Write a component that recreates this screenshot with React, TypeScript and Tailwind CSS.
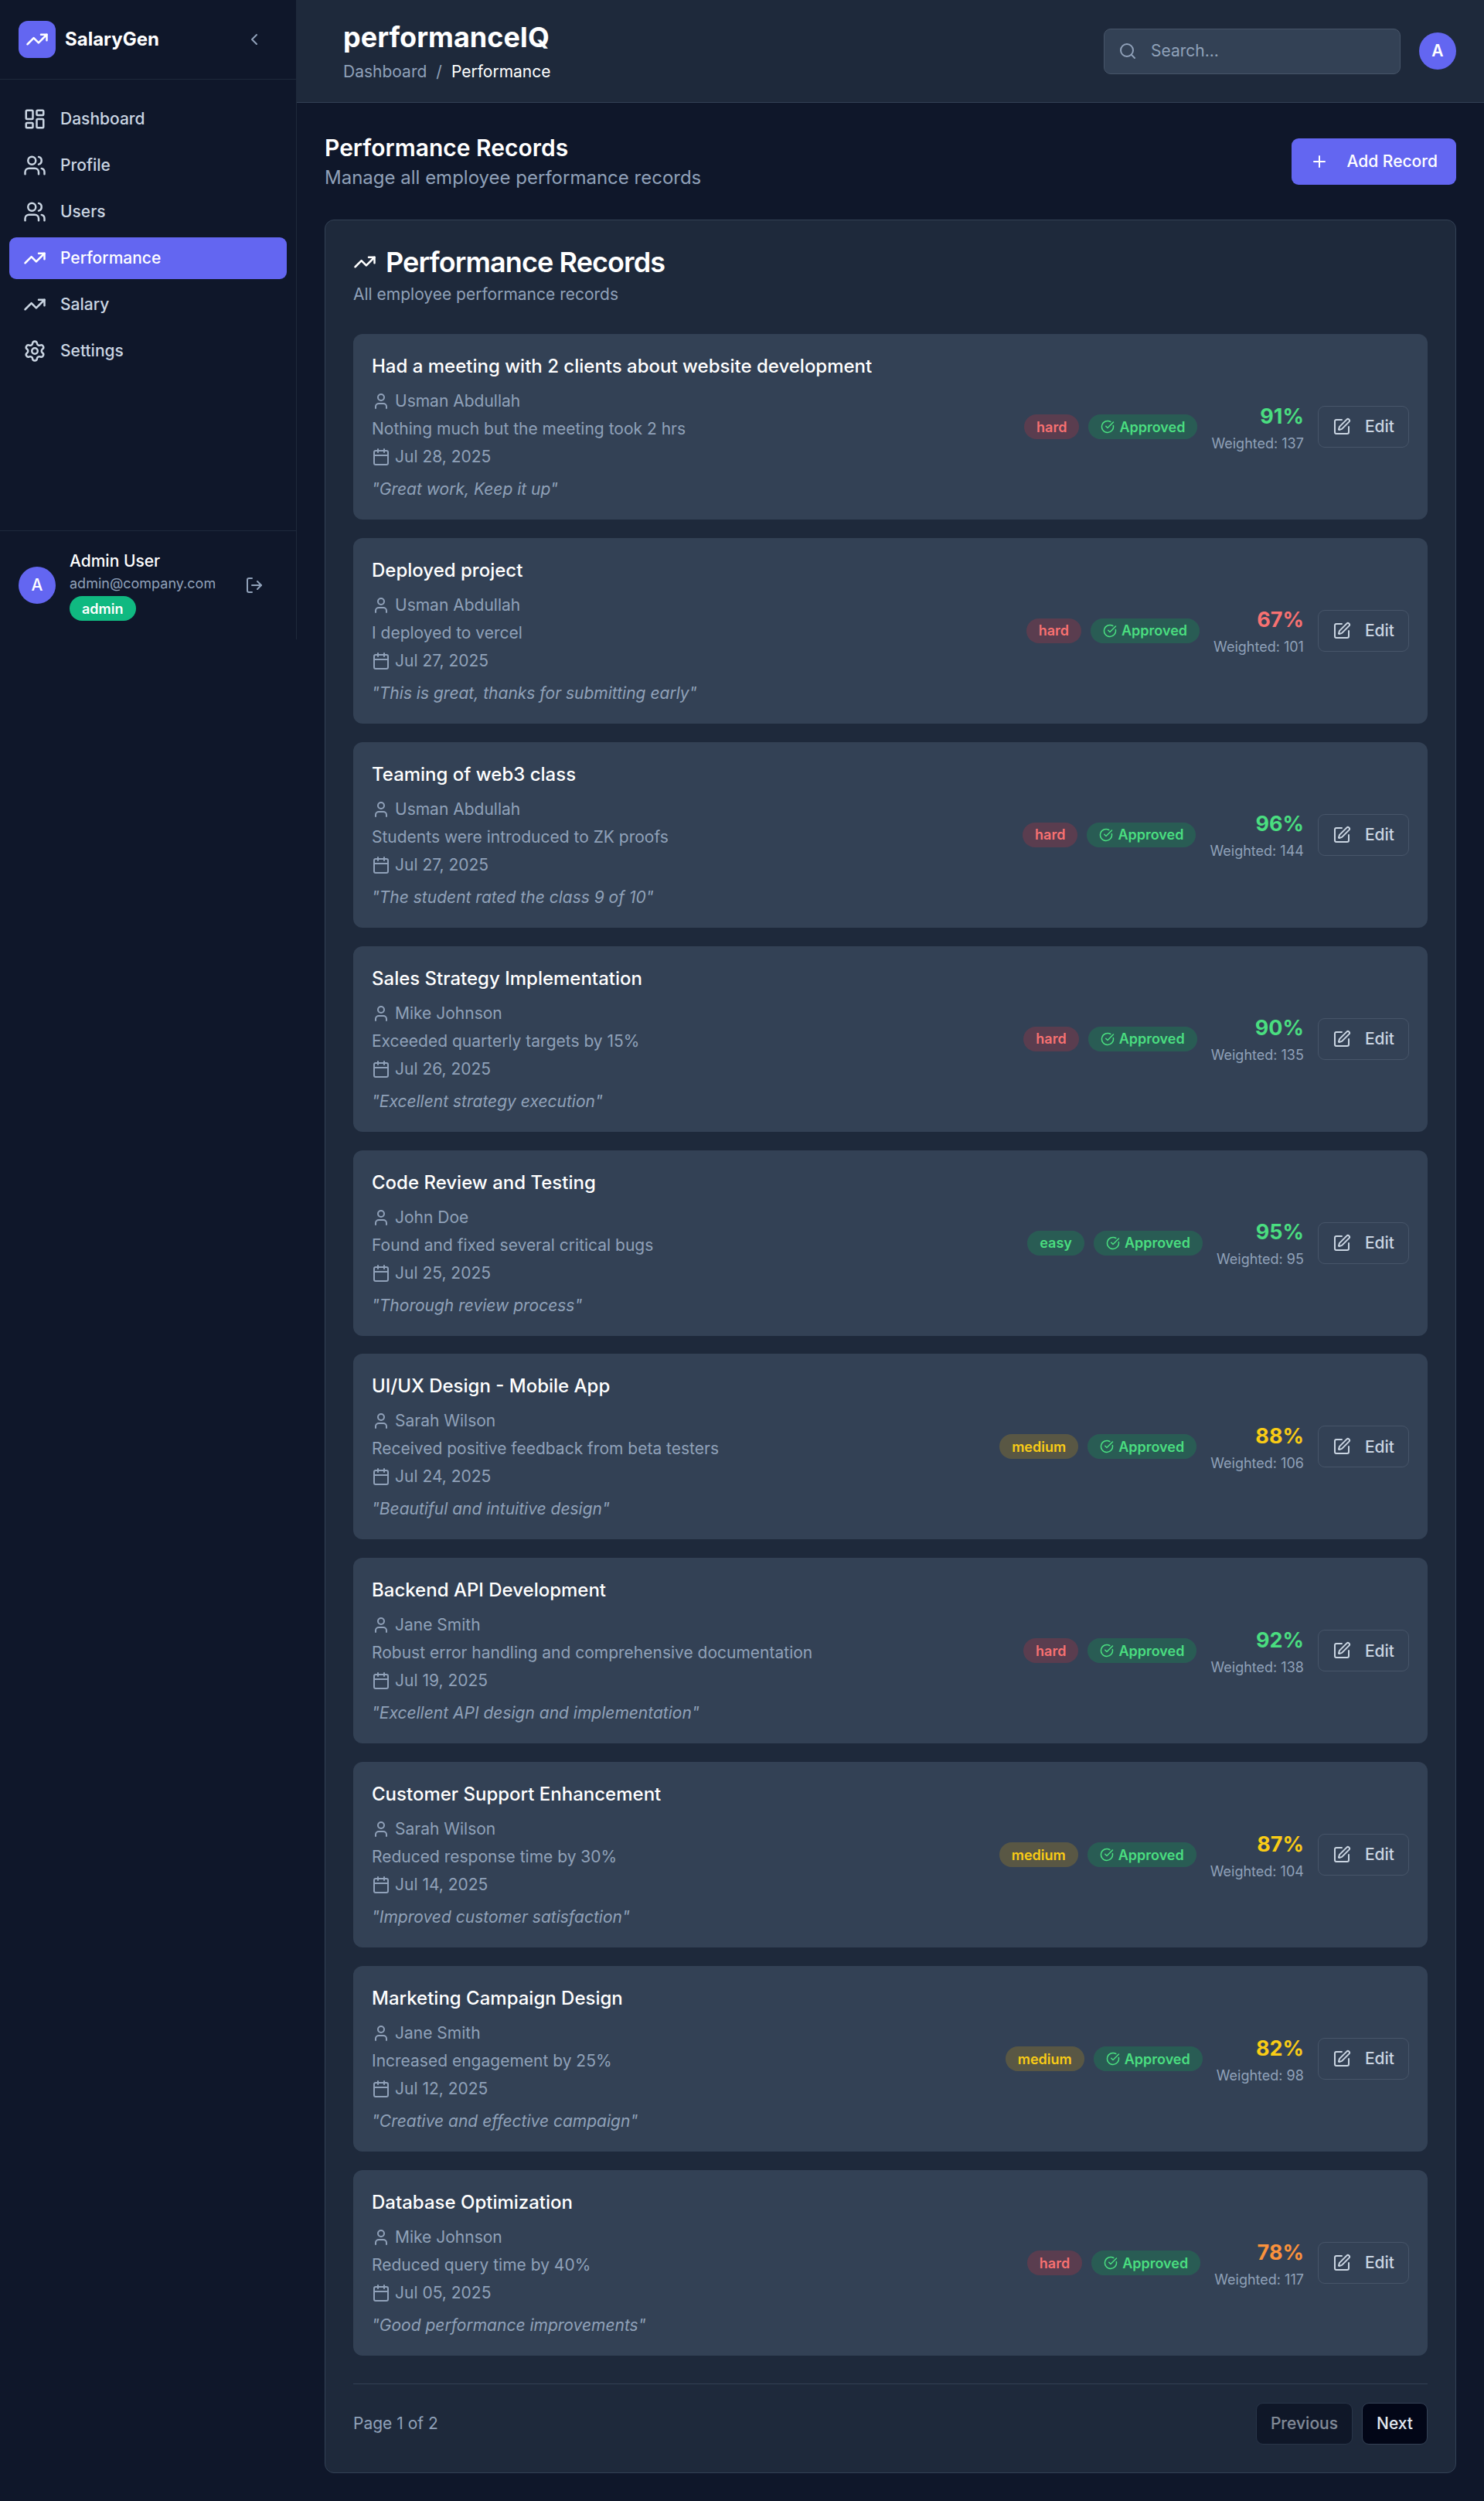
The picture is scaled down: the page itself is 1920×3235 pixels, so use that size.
import {
    Calendar,
    ChevronLeft,
    CircleCheckBig,
    LayoutDashboard,
    LogOut,
    Plus,
    Search,
    Settings,
    SquarePen,
    TrendingUp,
    User,
    Users,
} from "lucide-react";

type Difficulty = "easy" | "medium" | "hard";

type PerformanceRecord = {
    title: string;
    author: string;
    description: string;
    date: string;
    comment: string;
    difficulty: Difficulty;
    score: number;
    weighted: number;
};

const navItems = [
    { label: "Dashboard", icon: LayoutDashboard },
    { label: "Profile", icon: Users },
    { label: "Users", icon: Users },
    { label: "Performance", icon: TrendingUp, active: true },
    { label: "Salary", icon: TrendingUp },
    { label: "Settings", icon: Settings },
];

const records: PerformanceRecord[] = [
    { title: "Had a meeting with 2 clients about website development", author: "Usman Abdullah", description: "Nothing much but the meeting took 2 hrs", date: "Jul 28, 2025", comment: "Great work, Keep it up", difficulty: "hard", score: 91, weighted: 137 },
    { title: "Deployed project", author: "Usman Abdullah", description: "I deployed to vercel", date: "Jul 27, 2025", comment: "This is great, thanks for submitting early", difficulty: "hard", score: 67, weighted: 101 },
    { title: "Teaming of web3 class", author: "Usman Abdullah", description: "Students were introduced to ZK proofs", date: "Jul 27, 2025", comment: "The student rated the class 9 of 10", difficulty: "hard", score: 96, weighted: 144 },
    { title: "Sales Strategy Implementation", author: "Mike Johnson", description: "Exceeded quarterly targets by 15%", date: "Jul 26, 2025", comment: "Excellent strategy execution", difficulty: "hard", score: 90, weighted: 135 },
    { title: "Code Review and Testing", author: "John Doe", description: "Found and fixed several critical bugs", date: "Jul 25, 2025", comment: "Thorough review process", difficulty: "easy", score: 95, weighted: 95 },
    { title: "UI/UX Design - Mobile App", author: "Sarah Wilson", description: "Received positive feedback from beta testers", date: "Jul 24, 2025", comment: "Beautiful and intuitive design", difficulty: "medium", score: 88, weighted: 106 },
    { title: "Backend API Development", author: "Jane Smith", description: "Robust error handling and comprehensive documentation", date: "Jul 19, 2025", comment: "Excellent API design and implementation", difficulty: "hard", score: 92, weighted: 138 },
    { title: "Customer Support Enhancement", author: "Sarah Wilson", description: "Reduced response time by 30%", date: "Jul 14, 2025", comment: "Improved customer satisfaction", difficulty: "medium", score: 87, weighted: 104 },
    { title: "Marketing Campaign Design", author: "Jane Smith", description: "Increased engagement by 25%", date: "Jul 12, 2025", comment: "Creative and effective campaign", difficulty: "medium", score: 82, weighted: 98 },
    { title: "Database Optimization", author: "Mike Johnson", description: "Reduced query time by 40%", date: "Jul 05, 2025", comment: "Good performance improvements", difficulty: "hard", score: 78, weighted: 117 },
];

const difficultyStyles: Record<Difficulty, string> = {
    easy: "bg-green-500/20 text-[#4ade80]",
    medium: "bg-yellow-500/20 text-[#facc15]",
    hard: "bg-red-500/20 text-[#f87171]",
};

const scoreColor = (score: number) => {
    if (score >= 90) return "text-[#4ade80]";
    if (score >= 80) return "text-[#facc15]";
    if (score >= 70) return "text-[#fb923c]";
    return "text-[#f87171]";
};

const Sidebar = () => (
    <aside className="flex h-[827px] w-[384px] shrink-0 flex-col border-r border-[#1e293b] bg-[#0f172a]">
        <div className="flex h-[103px] shrink-0 items-center justify-between border-b border-[#1e293b] px-6">
            <div className="flex items-center gap-3">
                <div className="flex h-12 w-12 items-center justify-center rounded-xl bg-[#6366f1]">
                    <TrendingUp size={30} className="text-white" />
                </div>
                <span className="text-[24px] font-bold leading-9 text-white">SalaryGen</span>
            </div>
            <button className="flex w-[60px] justify-center text-slate-400">
                <ChevronLeft size={24} />
            </button>
        </div>

        <nav className="flex flex-1 flex-col gap-[6px] px-3 pt-6">
            {navItems.map(({ label, icon: Icon, active }) => (
                <a
                    key={label}
                    className={`flex h-[54px] items-center gap-[18px] rounded-[9px] px-[18px] text-[21px] font-medium ${
                        active ? "bg-[#6366f1] text-white" : "text-slate-300"
                    }`}
                >
                    <Icon size={30} />
                    {label}
                </a>
            ))}
        </nav>

        <div className="flex items-center gap-[18px] border-t border-[#1e293b] px-6 py-6">
            <div className="flex h-12 w-12 shrink-0 items-center justify-center rounded-full bg-[#6366f1] text-[21px] font-medium text-white">
                A
            </div>
            <div className="min-w-0 flex-1">
                <p className="text-[21px] font-medium leading-[30px] text-white">Admin User</p>
                <p className="text-[18px] leading-[27px] text-slate-400">admin@company.com</p>
                <span className="mt-[3px] flex h-8 w-fit items-center rounded-full bg-[#10b981] px-4 text-[18px] font-semibold text-white">
                    admin
                </span>
            </div>
            <button className="flex w-[60px] justify-center text-slate-400">
                <LogOut size={24} />
            </button>
        </div>
    </aside>
);

const TopBar = () => (
    <header className="flex items-center justify-between border-b border-[#334155] bg-[#1e293b] py-6 pl-[60px] pr-9">
        <div>
            <h1 className="text-[36px] font-bold leading-[48px] text-white">performanceIQ</h1>
            <div className="mt-[6px] flex items-center gap-3 text-[21px] leading-[30px]">
                <span className="text-slate-400">Dashboard</span>
                <span className="text-slate-400">/</span>
                <span className="text-white">Performance</span>
            </div>
        </div>
        <div className="flex items-center gap-6">
            <div className="flex h-[59px] w-[384px] items-center gap-[18px] rounded-[9px] border border-[#475569] bg-[#334155] px-[18px]">
                <Search size={24} className="shrink-0 text-slate-400" />
                <input
                    placeholder="Search..."
                    className="w-full bg-transparent text-[21px] text-white outline-none placeholder:text-slate-400"
                />
            </div>
            <div className="flex h-12 w-12 items-center justify-center rounded-full bg-[#6366f1] text-[21px] font-semibold text-white">
                A
            </div>
        </div>
    </header>
);

const RecordRow = ({ record }: { record: PerformanceRecord }) => (
    <article className="flex items-center justify-between rounded-[12px] bg-[#334155] p-6">
        <div>
            <h3 className="mb-3 text-[24px] font-medium leading-9 text-white">{record.title}</h3>
            <div className="flex flex-col gap-[6px] text-[21px] leading-[30px] text-slate-400">
                <div className="flex items-center gap-[6px]">
                    <User size={24} />
                    {record.author}
                </div>
                <p>{record.description}</p>
                <div className="flex items-center gap-[6px]">
                    <Calendar size={24} />
                    {record.date}
                </div>
            </div>
            <p className="mt-3 text-[21px] italic leading-[30px] text-slate-400">"{record.comment}"</p>
        </div>

        <div className="flex items-center gap-[18px]">
            <div className="flex items-center gap-3">
                <span className={`flex h-8 items-center rounded-full px-4 text-[18px] font-semibold ${difficultyStyles[record.difficulty]}`}>
                    {record.difficulty}
                </span>
                <span className="flex h-8 items-center gap-[6px] rounded-full bg-green-500/20 px-4 text-[18px] font-semibold text-[#4ade80]">
                    <CircleCheckBig size={18} />
                    Approved
                </span>
            </div>
            <div className="text-right">
                <p className={`text-[27px] font-bold leading-[42px] ${scoreColor(record.score)}`}>{record.score}%</p>
                <p className="text-[18px] leading-[27px] text-slate-400">Weighted: {record.weighted}</p>
            </div>
            <button className="flex h-[54px] items-center gap-[18px] rounded-[9px] border border-[#475569] px-[18px] text-[21px] font-medium text-slate-300">
                <SquarePen size={24} />
                Edit
            </button>
        </div>
    </article>
);

const App = () => (
    <div className="flex min-h-screen w-full bg-[#0f172a] font-['Inter',sans-serif]">
        <Sidebar />
        <div className="min-w-0 flex-1">
            <TopBar />
            <main className="p-9 pt-[37px]">
                <div className="mb-9 flex items-center justify-between">
                    <div>
                        <h2 className="text-[30px] font-semibold leading-[42px] text-white">Performance Records</h2>
                        <p className="text-[24px] leading-9 text-slate-400">Manage all employee performance records</p>
                    </div>
                    <button className="flex h-[60px] items-center gap-6 rounded-[9px] bg-[#6366f1] px-6 text-[21px] font-medium text-white">
                        <Plus size={24} />
                        Add Record
                    </button>
                </div>

                <section className="rounded-[12px] border border-[#334155] bg-[#1e293b] p-9">
                    <div className="flex items-center gap-3">
                        <TrendingUp size={30} className="text-white" />
                        <h2 className="text-[36px] font-semibold leading-9 tracking-tight text-white">Performance Records</h2>
                    </div>
                    <p className="mt-[9px] text-[21px] leading-[30px] text-slate-400">All employee performance records</p>

                    <div className="mt-9 flex flex-col gap-[23.9px]">
                        {records.map((record) => (
                            <RecordRow key={record.title} record={record} />
                        ))}
                    </div>

                    <div className="mt-9 flex items-center justify-between border-t border-[#334155] pt-6">
                        <span className="text-[21px] text-slate-400">Page 1 of 2</span>
                        <div className="flex items-center gap-3">
                            <button className="h-[54px] rounded-[9px] border border-[#334155] bg-[#020617] px-[18px] text-[21px] font-medium text-slate-200 opacity-50">
                                Previous
                            </button>
                            <button className="h-[54px] rounded-[9px] border border-[#334155] bg-[#020617] px-[18px] text-[21px] font-medium text-slate-200">
                                Next
                            </button>
                        </div>
                    </div>
                </section>
            </main>
        </div>
    </div>
);

export default App;
